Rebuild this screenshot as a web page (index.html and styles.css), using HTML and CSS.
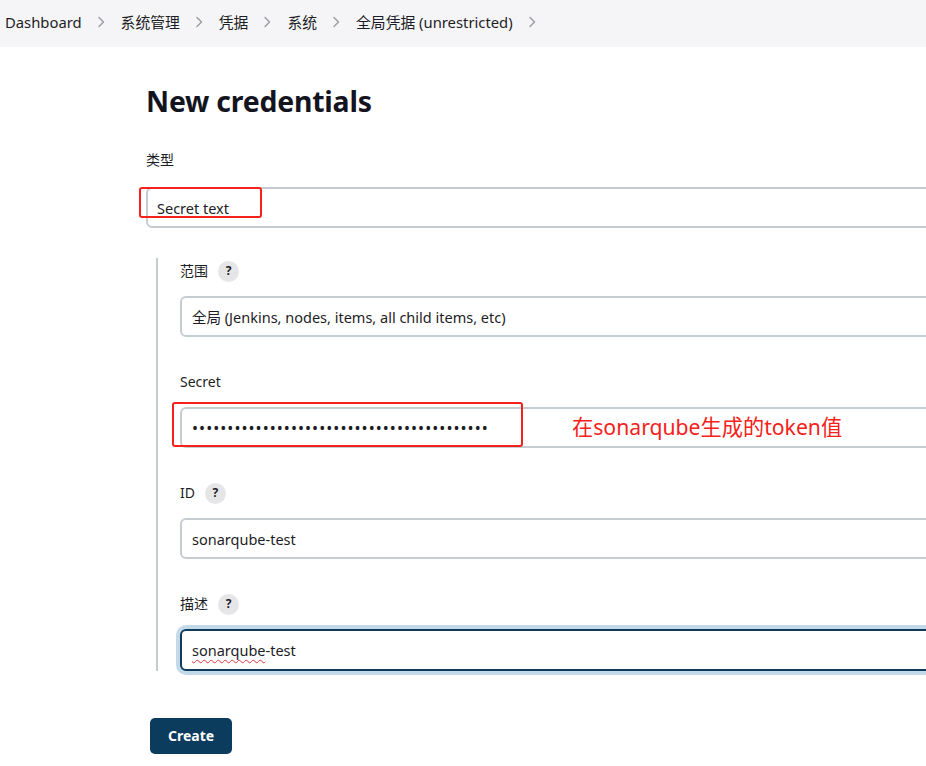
FILE: index.html
```html
<!DOCTYPE html>
<html lang="zh">
<head>
<meta charset="utf-8">
<title>New credentials</title>
<link rel="stylesheet" href="styles.css">
</head>
<body>
<nav class="breadcrumbs">
  <a class="crumb">Dashboard</a>
  <span class="sep"><svg viewBox="0 0 10 14" width="10" height="14"><path d="M3 2.5 L7.5 7 L3 11.5" fill="none" stroke="#9a9aa2" stroke-width="1.4" stroke-linecap="round" stroke-linejoin="round"/></svg></span>
  <a class="crumb">系统管理</a>
  <span class="sep"><svg viewBox="0 0 10 14" width="10" height="14"><path d="M3 2.5 L7.5 7 L3 11.5" fill="none" stroke="#9a9aa2" stroke-width="1.4" stroke-linecap="round" stroke-linejoin="round"/></svg></span>
  <a class="crumb">凭据</a>
  <span class="sep"><svg viewBox="0 0 10 14" width="10" height="14"><path d="M3 2.5 L7.5 7 L3 11.5" fill="none" stroke="#9a9aa2" stroke-width="1.4" stroke-linecap="round" stroke-linejoin="round"/></svg></span>
  <a class="crumb">系统</a>
  <span class="sep"><svg viewBox="0 0 10 14" width="10" height="14"><path d="M3 2.5 L7.5 7 L3 11.5" fill="none" stroke="#9a9aa2" stroke-width="1.4" stroke-linecap="round" stroke-linejoin="round"/></svg></span>
  <a class="crumb">全局凭据 (unrestricted)</a>
  <span class="sep"><svg viewBox="0 0 10 14" width="10" height="14"><path d="M3 2.5 L7.5 7 L3 11.5" fill="none" stroke="#9a9aa2" stroke-width="1.4" stroke-linecap="round" stroke-linejoin="round"/></svg></span>
</nav>

<main class="main">
  <h1 class="title">New credentials</h1>

  <div class="field field-type">
    <div class="label">类型</div>
    <div class="annotated">
      <div class="select">Secret text</div>
      <div class="mark mark-type"></div>
    </div>
  </div>

  <div class="nested">
    <div class="field">
      <div class="label">范围 <span class="help">?</span></div>
      <div class="input">全局 (Jenkins, nodes, items, all child items, etc)</div>
    </div>

    <div class="field">
      <div class="label">Secret</div>
      <div class="annotated">
        <div class="input secret">••••••••••••••••••••••••••••••••••••••••••</div>
        <div class="mark mark-secret"></div>
        <div class="note">在sonarqube生成的token值</div>
      </div>
    </div>

    <div class="field">
      <div class="label">ID <span class="help">?</span></div>
      <div class="input">sonarqube-test</div>
    </div>

    <div class="field last">
      <div class="label">描述 <span class="help">?</span></div>
      <div class="input focused"><span class="misspelled">sonarqube</span>-test</div>
    </div>
  </div>

  <button class="btn-create">Create</button>
</main>
</body>
</html>
```

FILE: styles.css
```css
html, body {
  margin: 0;
  padding: 0;
  overflow: hidden;
  background: #ffffff;
}
body {
  font-family: "Noto Sans", "Noto Sans CJK SC", sans-serif;
  color: #14141f;
  width: 926px;
  height: 766px;
}

.breadcrumbs {
  height: 47px;
  background: #f5f5f7;
  display: flex;
  align-items: center;
  padding-left: 5px;
  padding-bottom: 4px;
  box-sizing: border-box;
  font-size: 14.8px;
  color: #1d1d26;
}
.crumb {
  white-space: nowrap;
}
.sep {
  display: flex;
  align-items: center;
  margin: 0 15px 0 14px;
}

.main {
  padding-left: 146px;
  padding-top: 1px;
}
.title {
  margin: 0;
  padding-top: 35px;
  font-size: 28.4px;
  line-height: 36px;
  font-weight: 700;
  color: #14141f;
  letter-spacing: -0.2px;
}

.field {
  margin-bottom: 35px;
}
.field.last {
  margin-bottom: 0;
}
.field-type {
  margin-top: 31px;
  margin-bottom: 30px;
}
.label {
  font-size: 14px;
  line-height: 20px;
  height: 20px;
  display: flex;
  align-items: center;
  margin-bottom: 15px;
  color: #1d1d26;
}
.field-type .label {
  margin-bottom: 17px;
}
.help {
  display: inline-flex;
  align-items: center;
  justify-content: center;
  width: 21px;
  height: 21px;
  border-radius: 50%;
  background: #e6e6e9;
  font-size: 12px;
  font-weight: 700;
  margin-left: 10px;
  color: #1d1d26;
}

.annotated {
  position: relative;
}

.select, .input {
  box-sizing: border-box;
  height: 41px;
  border: 2px solid #c5cdd2;
  border-radius: 6px;
  display: flex;
  align-items: center;
  font-size: 14.5px;
  color: #1d1d26;
  background: #fff;
  white-space: nowrap;
}
.select {
  width: 860px;
  height: 41px;
  padding-left: 9px;
}
.input {
  width: 820px;
  padding-left: 10px;
}
.input.secret {
  font-size: 16px;
  letter-spacing: 1.05px;
}
.input.focused {
  border-color: #0d3b5e;
  box-shadow: 0 0 0 4px #c5dae8;
  height: 42px;
}
.misspelled {
  text-decoration: underline wavy #e0393e;
  text-decoration-thickness: 1px;
  text-underline-offset: 3px;
}

.nested {
  margin-left: 10px;
  border-left: 2px solid #c5cdd2;
  padding-left: 22px;
  padding-top: 3px;
}

.mark {
  position: absolute;
  border: 2px solid #f5221b;
  border-radius: 3px;
  box-sizing: border-box;
}
.mark-type {
  left: -7px;
  top: 0;
  width: 123px;
  height: 31px;
}
.mark-secret {
  left: -8px;
  top: -5px;
  width: 351px;
  height: 45px;
}
.note {
  position: absolute;
  left: 392px;
  top: 7px;
  font-size: 21.2px;
  line-height: 26px;
  color: #f5221b;
  white-space: nowrap;
}

.btn-create {
  margin-top: 47px;
  margin-left: 4px;
  width: 82px;
  height: 36px;
  border: none;
  border-radius: 5px;
  background: #0b3b5d;
  color: #ffffff;
  font-family: "Noto Sans", sans-serif;
  font-size: 14px;
  font-weight: 700;
  padding-bottom: 3px;
}
```
